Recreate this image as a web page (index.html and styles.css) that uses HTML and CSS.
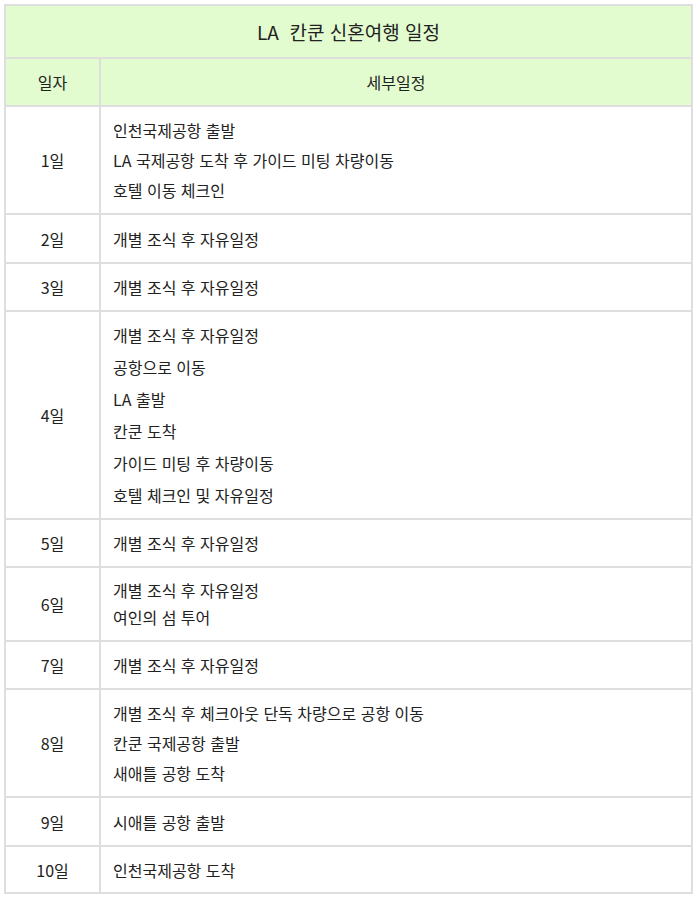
FILE: index.html
```html
<!DOCTYPE html>
<html lang="ko">
<head>
<meta charset="utf-8">
<link rel="stylesheet" href="styles.css">
</head>
<body>
<table class="sched">
  <colgroup><col class="c-day"><col class="c-detail"></colgroup>
  <thead>
    <tr class="r-title"><th colspan="2" class="title">LA&nbsp; 칸쿤 신혼여행 일정</th></tr>
    <tr class="r-head"><th>일자</th><th>세부일정</th></tr>
  </thead>
  <tbody>
    <tr class="r-108"><td class="day">1일</td><td class="detail lh30"><p>인천국제공항 출발</p><p>LA 국제공항 도착 후 가이드 미팅 차량이동</p><p>호텔 이동 체크인</p></td></tr>
    <tr class="r-49"><td class="day">2일</td><td class="detail"><p>개별 조식 후 자유일정</p></td></tr>
    <tr class="r-48"><td class="day">3일</td><td class="detail"><p>개별 조식 후 자유일정</p></td></tr>
    <tr class="r-208"><td class="day">4일</td><td class="detail lh32"><p>개별 조식 후 자유일정</p><p>공항으로 이동</p><p>LA 출발</p><p>칸쿤 도착</p><p>가이드 미팅 후 차량이동</p><p>호텔 체크인 및 자유일정</p></td></tr>
    <tr class="r-48"><td class="day">5일</td><td class="detail"><p>개별 조식 후 자유일정</p></td></tr>
    <tr class="r-74"><td class="day">6일</td><td class="detail lh27"><p>개별 조식 후 자유일정</p><p>여인의 섬 투어</p></td></tr>
    <tr class="r-48"><td class="day">7일</td><td class="detail"><p>개별 조식 후 자유일정</p></td></tr>
    <tr class="r-108"><td class="day">8일</td><td class="detail lh30"><p>개별 조식 후 체크아웃 단독 차량으로 공항 이동</p><p>칸쿤 국제공항 출발</p><p>새애틀 공항 도착</p></td></tr>
    <tr class="r-49"><td class="day">9일</td><td class="detail"><p>시애틀 공항 출발</p></td></tr>
    <tr class="r-47"><td class="day">10일</td><td class="detail"><p>인천국제공항 도착</p></td></tr>
  </tbody>
</table>
</body>
</html>
```

FILE: styles.css
```css
html, body {
  margin: 0;
  padding: 0;
  background: #ffffff;
}
body {
  padding: 4px 0 0 4px;
  font-family: "Noto Sans CJK KR", "Noto Sans", sans-serif;
  color: #222222;
  font-size: 16px;
}
.sched {
  border-collapse: collapse;
  width: 689px;
  table-layout: fixed;
}
.c-day { width: 95px; }
.sched th,
.sched td {
  border: 2px solid #dedede;
  padding: 0;
  vertical-align: middle;
}
.sched th {
  background: #e2fccf;
  font-weight: normal;
  text-align: center;
  font-size: 16px;
}
.sched th.title {
  font-size: 19px;
}
.r-title th { height: 51px; }
.r-head th { height: 46px; }
.day {
  text-align: center;
}
.detail {
  text-align: left;
  padding-left: 12px !important;
}
.detail p {
  margin: 0;
  line-height: 24px;
}
.lh30 p { line-height: 30px; }
.lh32 p { line-height: 32px; }
.lh27 p { line-height: 27px; }
.r-108 td { height: 106px; }
.r-49 td { height: 47px; }
.r-48 td { height: 46px; }
.r-47 td { height: 45px; }
.r-208 td { height: 206px; }
.r-74 td { height: 72px; }
```
